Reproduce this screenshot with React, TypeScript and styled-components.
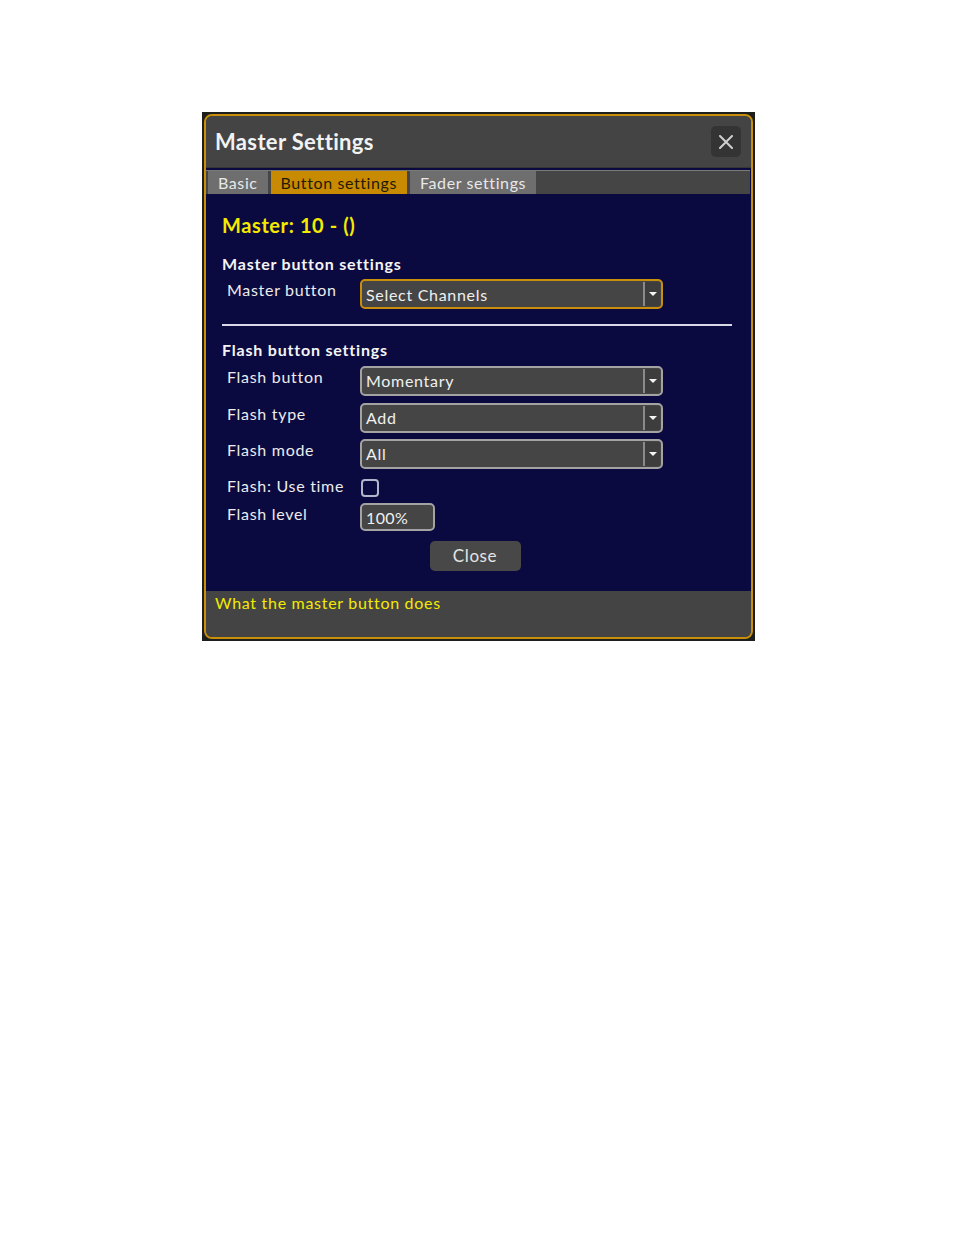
import React from "react";
import styled, { createGlobalStyle } from "styled-components";

const Global = createGlobalStyle`
  html, body { margin: 0; padding: 0; background: #ffffff; }
  body { font-family: Lato, "Open Sans", sans-serif; }
`;

const Page = styled.div`
  width: 954px;
  height: 1235px;
  padding: 112px 0 0 202px;
  box-sizing: border-box;
`;

const Backdrop = styled.div`
  width: 553px;
  height: 529px;
  padding: 2px;
  box-sizing: border-box;
  background: #1c1f1c;
`;

const Dialog = styled.div`
  width: 549px;
  height: 525px;
  box-sizing: border-box;
  border: 2px solid #c98e0a;
  border-radius: 8px;
  background: #444444;
  display: flex;
  flex-direction: column;
  overflow: hidden;
`;

const TitleBar = styled.div`
  height: 51px;
  flex: none;
  display: flex;
  align-items: center;
  justify-content: space-between;
  padding: 0 10px 0 9px;
  background: #444444;
  border-bottom: 1px solid #363636;
`;

const Title = styled.h1`
  margin: 0;
  font-size: 22px;
  font-weight: 700;
  color: #f2f2f2;
  letter-spacing: 0.35px;
`;

const CloseX = styled.button`
  width: 30px;
  height: 31px;
  border: none;
  border-radius: 5px;
  background: #343434;
  display: flex;
  align-items: center;
  justify-content: center;
  padding: 0;
`;

const Body = styled.div`
  flex: 1;
  background: #0b0a40;
  display: flex;
  flex-direction: column;
  padding-top: 2px;
`;

const TabRow = styled.div`
  margin-right: 1px;
  height: 24px;
  display: flex;
  gap: 3px;
  padding-left: 2px;
  background: #454545;
  border-top: 1px solid #7a7a7a;
  box-sizing: border-box;
`;

const Tab = styled.div<{ $active?: boolean }>`
  height: 23px;
  padding: 0 10px;
  display: flex;
  align-items: center;
  font-size: 16px;
  letter-spacing: 0.6px;
  background: ${(p) => (p.$active ? "#c88a00" : "#6e6e6e")};
  color: ${(p) => (p.$active ? "#231a05" : "#e8e8e8")};
`;

const Content = styled.div`
  flex: 1;
  padding: 18px 19px 20px 16px;
  display: flex;
  flex-direction: column;
`;

const MasterTitle = styled.div`
  font-size: 20px;
  font-weight: 700;
  line-height: 26px;
  color: #f4ea00;
  letter-spacing: 0.6px;
`;

const Heading = styled.div<{ $top: number }>`
  margin-top: ${(p) => p.$top}px;
  font-size: 16px;
  font-weight: 700;
  line-height: 20px;
  color: #f4f4f4;
  letter-spacing: 0.8px;
`;

const Row = styled.div<{ $top: number }>`
  margin-top: ${(p) => p.$top}px;
  display: flex;
  align-items: flex-start;
  padding-left: 5px;
`;

const Label = styled.div`
  width: 133px;
  flex: none;
  font-size: 16px;
  line-height: 22px;
  color: #ececec;
  letter-spacing: 0.7px;
`;

const Select = styled.div<{ $focus?: boolean }>`
  width: 303px;
  height: 30px;
  box-sizing: border-box;
  border: 2px solid ${(p) => (p.$focus ? "#c98e0a" : "#a3a3a3")};
  border-radius: 5px;
  background: #454545;
  display: flex;
  align-items: stretch;
`;

const SelectText = styled.div`
  flex: 1;
  display: flex;
  align-items: center;
  padding-left: 4px;
  font-size: 16px;
  color: #f0f0f0;
  letter-spacing: 0.7px;
`;

const Arrow = styled.div`
  width: 15px;
  margin: 1px 1px 1px 0;
  border-left: 2px solid #8a8a8a;
  background: #3d3d3d;
  display: flex;
  align-items: center;
  justify-content: center;
  &::after {
    content: "";
    border-left: 4px solid transparent;
    border-right: 4px solid transparent;
    border-top: 4px solid #f4f4f4;
  }
`;

const Divider = styled.hr`
  margin: 15px 0 0 0;
  border: none;
  height: 1.5px;
  background: #d8d8e6;
`;

const Check = styled.div`
  width: 18px;
  height: 18px;
  margin-top: 4px;
  margin-left: 1px;
  box-sizing: border-box;
  border: 2px solid #b3b3cc;
  border-radius: 4px;
`;

const Input = styled.div`
  width: 75px;
  height: 28px;
  box-sizing: border-box;
  border: 2px solid #a3a3a3;
  border-radius: 5px;
  background: #454545;
  display: flex;
  align-items: center;
  padding: 1px 0 0 4px;
  font-size: 16px;
  color: #f0f0f0;
  letter-spacing: 0.4px;
`;

const CloseButton = styled.button`
  margin: 10px auto 0;
  width: 91px;
  height: 30px;
  border: none;
  border-radius: 5px;
  background: #484848;
  color: #e4e4e4;
  font-family: Lato, "Open Sans", sans-serif;
  font-size: 17px;
  letter-spacing: 0.6px;
  position: relative;
  left: -2px;
`;

const Footer = styled.div`
  height: 46px;
  flex: none;
  background: #444444;
  padding: 2px 0 0 9px;
  box-sizing: border-box;
  font-size: 16px;
  color: #f4ea00;
  letter-spacing: 0.7px;
`;

const SelectBox = ({ value, focus }: { value: string; focus?: boolean }) => (
  <Select $focus={focus}>
    <SelectText>{value}</SelectText>
    <Arrow />
  </Select>
);

export default function App() {
  return (
    <>
      <Global />
      <Page>
        <Backdrop>
          <Dialog>
            <TitleBar>
              <Title>Master Settings</Title>
              <CloseX aria-label="Close">
                <svg width="14" height="14" viewBox="0 0 14 14">
                  <path d="M1 1 L13 13 M13 1 L1 13" stroke="#cfcfcf" strokeWidth="2" strokeLinecap="round" />
                </svg>
              </CloseX>
            </TitleBar>
            <Body>
              <TabRow>
                <Tab>Basic</Tab>
                <Tab $active>Button settings</Tab>
                <Tab>Fader settings</Tab>
              </TabRow>
              <Content>
                <MasterTitle>Master: 10 - ()</MasterTitle>
                <Heading $top={16}>Master button settings</Heading>
                <Row $top={5}>
                  <Label>Master button</Label>
                  <SelectBox value="Select Channels" focus />
                </Row>
                <Divider />
                <Heading $top={14}>Flash button settings</Heading>
                <Row $top={6}>
                  <Label>Flash button</Label>
                  <SelectBox value="Momentary" />
                </Row>
                <Row $top={7}>
                  <Label>Flash type</Label>
                  <SelectBox value="Add" />
                </Row>
                <Row $top={6}>
                  <Label>Flash mode</Label>
                  <SelectBox value="All" />
                </Row>
                <Row $top={6}>
                  <Label>Flash: Use time</Label>
                  <Check />
                </Row>
                <Row $top={6}>
                  <Label>Flash level</Label>
                  <Input>100%</Input>
                </Row>
                <CloseButton>Close</CloseButton>
              </Content>
            </Body>
            <Footer>What the master button does</Footer>
          </Dialog>
        </Backdrop>
      </Page>
    </>
  );
}
